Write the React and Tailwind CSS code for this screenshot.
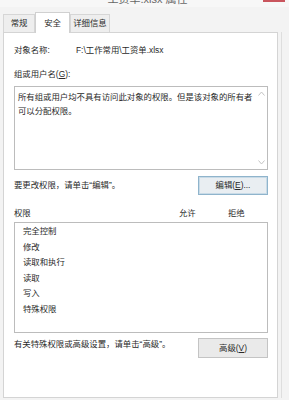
import React from "react";

const perms = ["完全控制", "修改", "读取和执行", "读取", "写入", "特殊权限"];

const App = () => {
  return (
    <div
      className="w-[289px] h-[400px] overflow-hidden bg-[#f3f3f3] text-[8.4px] text-[#2a2a2a] whitespace-nowrap"
      style={{ fontFamily: '"Liberation Sans", "Noto Sans CJK SC", sans-serif' }}
    >
      {/* title bar, cut off at the top */}
      <div className="relative h-[7px] overflow-hidden bg-[#f7f7f7]">
        <div className="-mt-[7px] text-center text-[11px] leading-[13px] text-[#666] pl-[6px]">工资单.xlsx 属性</div>
        <div className="absolute right-[4px] top-0 w-[22px] h-[2px] bg-[#c9555d]" />
      </div>

      {/* tabs */}
      <div className="flex items-end h-[25px] pl-[3px]">
        <div className="h-[18px] w-[32px] border border-[#d6d6d6] border-b-0 bg-[#eeeeee] flex items-center justify-center">
          常规
        </div>
        <div className="relative z-10 -mb-px h-[21px] w-[35px] border border-[#d0d0d0] border-b-0 bg-white flex items-center justify-center">
          安全
        </div>
        <div className="h-[18px] w-[40px] border border-[#d6d6d6] border-b-0 bg-[#eeeeee] flex items-center justify-center">
          详细信息
        </div>
      </div>

      {/* panel */}
      <div className="flex">
        <div className="ml-[3px] w-[275px] h-[366px] bg-white border border-[#d4d4d4] pl-[10px] pr-[9px]">
          <div className="flex items-center h-[14px] mt-[10px] leading-none">
            <span className="w-[62px]">对象名称:</span>
            <span>F:\工作常用\工资单.xlsx</span>
          </div>

          <div className="mt-[13px] h-[12px] leading-none">
            组或用户名(<span className="underline">G</span>):
          </div>

          <div className="mt-[4px] h-[84px] border border-[#bcbcbc] flex">
            <div className="flex-1 pl-[3px] pt-[3px] leading-[14px] whitespace-normal">
              所有组或用户均不具有访问此对象的权限。但是该对象的所有者可以分配权限。
            </div>
            <div className="w-[11px] flex flex-col items-center justify-between py-[4px]">
              <svg width="7" height="5" viewBox="0 0 7 5">
                <path d="M0.5 4.5 L3.5 1 L6.5 4.5" fill="none" stroke="#c4c4c4" strokeWidth="1" />
              </svg>
              <svg width="7" height="5" viewBox="0 0 7 5">
                <path d="M0.5 0.5 L3.5 4 L6.5 0.5" fill="none" stroke="#c4c4c4" strokeWidth="1" />
              </svg>
            </div>
          </div>

          <div className="flex items-center justify-between mt-[6px] h-[19px]">
            <span className="leading-none">要更改权限，请单击“编辑”。</span>
            <div className="w-[70px] h-[19px] border border-[#8fb4cc] bg-[#e9eef2] flex items-center justify-center shadow-[inset_0_0_0_1px_#c9dbe7]">
              编辑(<span className="underline">E</span>)...
            </div>
          </div>

          <div className="flex items-center mt-[11px] h-[14px] leading-none">
            <span className="w-[165px]">权限</span>
            <span className="w-[49px]">允许</span>
            <span>拒绝</span>
          </div>

          <div className="mt-[2px] h-[111px] border border-[#bcbcbc] pl-[8px] pt-[1px]">
            {perms.map((p) => (
              <div key={p} className="h-[15.6px] leading-[15.6px]">
                {p}
              </div>
            ))}
          </div>

          <div className="flex items-start justify-between mt-[5px]">
            <span className="leading-none mt-[2px]">有关特殊权限或高级设置，请单击“高级”。</span>
            <div className="w-[70px] h-[20px] border border-[#c4c4c4] bg-[#eaeaea] flex items-center justify-center">
              高级(<span className="underline">V</span>)
            </div>
          </div>
        </div>
        <div className="ml-[3px] w-px h-[366px] bg-[#dedede]" />
      </div>
    </div>
  );
};

export default App;
